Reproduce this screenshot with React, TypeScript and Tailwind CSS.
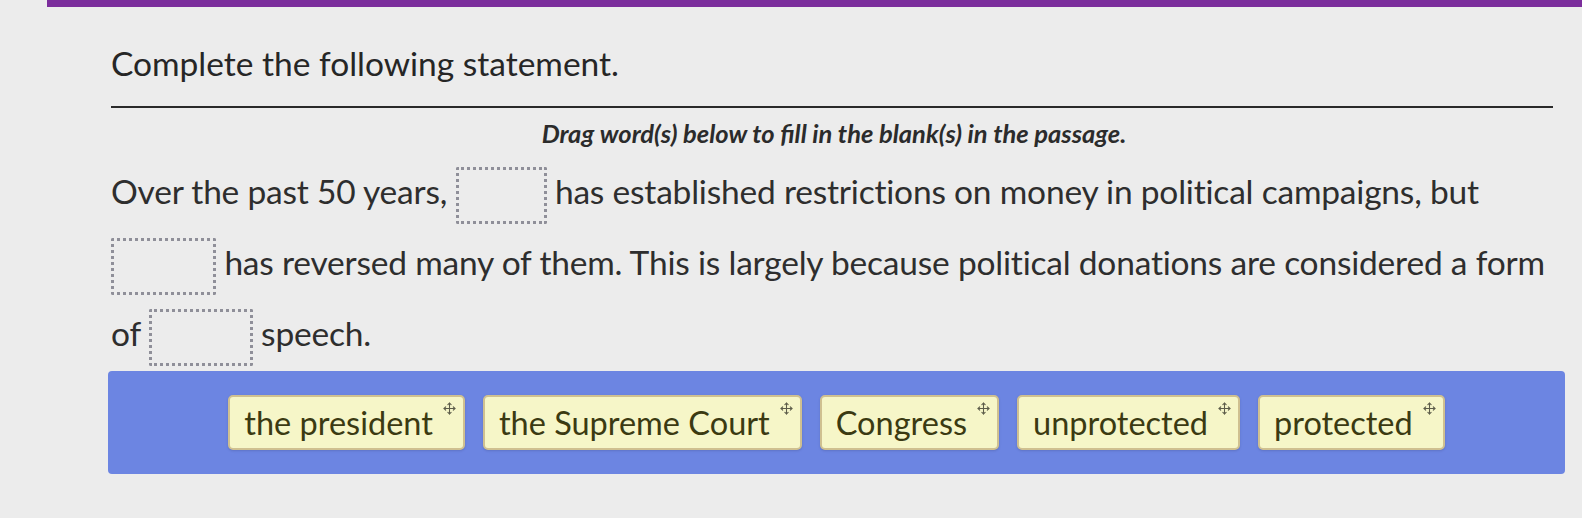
import { Move } from "lucide-react";

const words = ["the president", "the Supreme Court", "Congress", "unprotected", "protected"];

function Blank({ className = "" }: { className?: string }) {
  return (
    <span
      className={`inline-block h-[57px] w-[91px] rounded-[2px] border-[3px] border-dotted border-[#8f8f99] align-middle ${className}`}
    />
  );
}

function Chip({ label }: { label: string }) {
  return (
    <div className="flex h-[55px] items-start rounded-[5px] border-2 border-[#cfc090] bg-[#f6f6c8] pl-[14px] pr-[7px] text-[#3b3a12] shadow-sm">
      <span className="pt-[7px] text-[32.5px] leading-[38px]">{label}</span>
      <Move className="ml-[10px] mt-[5px] h-[13px] w-[13px] text-[#5d5d4a]" strokeWidth={2} />
    </div>
  );
}

export default function App() {
  return (
    <div className="h-[518px] w-full overflow-hidden bg-[#ececec] font-['Lato','Liberation_Sans',sans-serif] text-[#2e2e2e]">
      <div className="ml-[47px] h-[7px] bg-[#7b2d9c]" />
      <div className="pl-[111px] pr-[17px]">
        <h1 className="pt-[34px] text-[33.5px] leading-[44px] text-[#262626]">Complete the following statement.</h1>
        <div className="mt-[21px] h-[2px] w-[1442px] bg-[#2a2a2a]" />
        <p className="mt-[10px] pl-[4px] pr-[12px] text-center text-[25.5px] font-bold italic leading-[30px] text-[#2b2b2b]">
          Drag word(s) below to fill in the blank(s) in the passage.
        </p>
        <div className="mt-[8px] text-[33.5px] leading-[71px] tracking-[-0.2px]">
          Over the past 50 years, <Blank /> has established restrictions on money in political campaigns, but
          <br />
          <Blank className="w-[105px]" /> has reversed many of them. This is largely because political donations are considered a form
          <br />
          of <Blank className="w-[104px]" /> speech.
        </div>
        <div className="ml-[-3px] mt-[2px] flex flex-wrap justify-center gap-[18px] rounded-[4px] bg-[#6c85e2] px-4 py-[24px]">
          {words.map((w) => (
            <Chip key={w} label={w} />
          ))}
        </div>
      </div>
    </div>
  );
}
